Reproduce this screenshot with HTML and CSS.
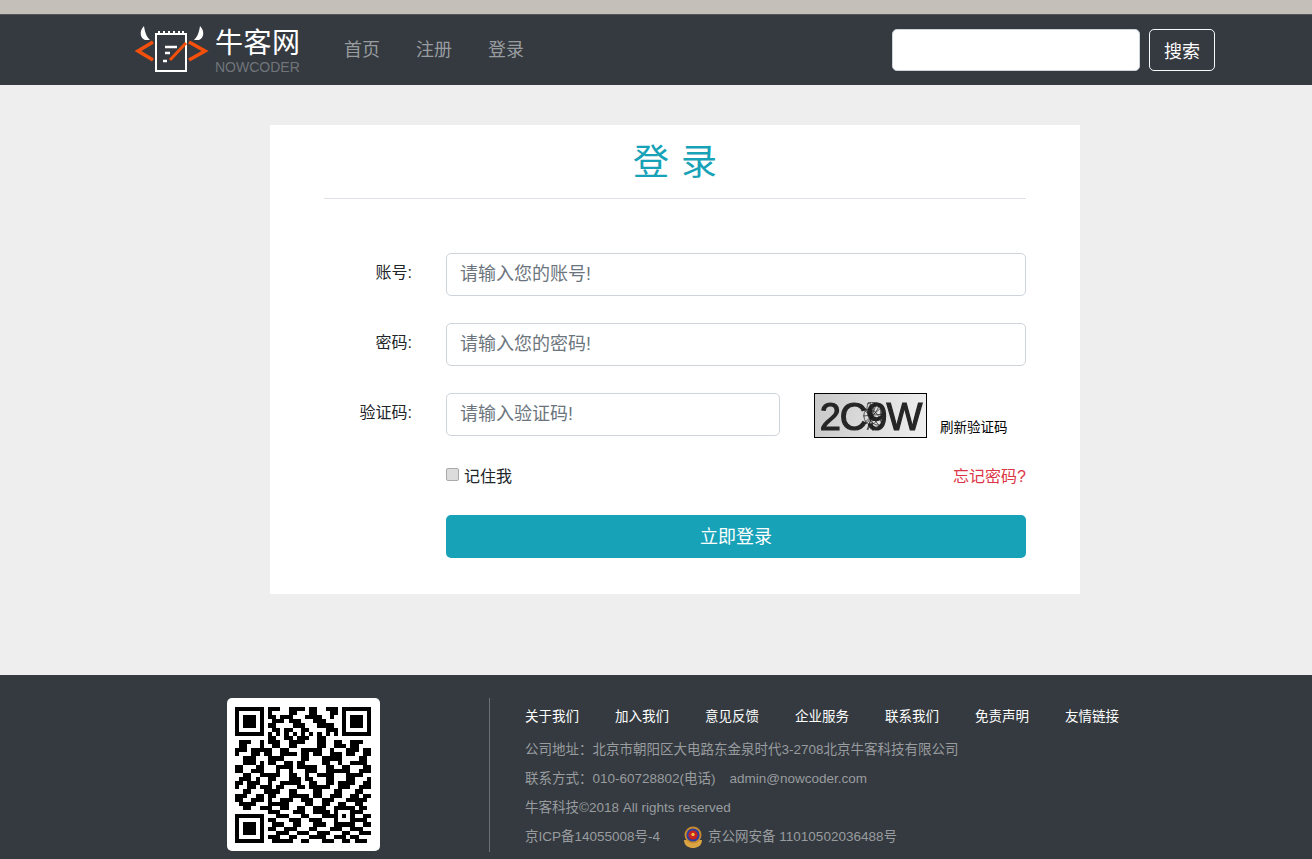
FILE: index.html
```html
<!DOCTYPE html>
<html lang="zh-CN">
<head>
    <meta charset="UTF-8">
    <meta name="viewport" content="width=device-width, initial-scale=1.0">
    <title>牛客网 - 登录</title>
    <link rel="stylesheet" href="styles.css">
</head>
<body>
    <div class="top-strip"></div>

    <header class="site-header">
        <div class="wrap header-inner">
            <a class="logo" href="#">
                <svg class="logo-mark" width="74" height="48" viewBox="0 0 74 48">
                    <path d="M9 1 C4 6 5 13 10 15 L15 15 C11 11 10 7 9 1Z" fill="#fff"/>
                    <path d="M65 1 C70 6 69 13 64 15 L59 15 C63 11 64 7 65 1Z" fill="#fff"/>
                    <path d="M18 17 L3 26 L18 35" fill="none" stroke="#f4500c" stroke-width="3.6"/>
                    <path d="M54 17 L70 26 L54 35" fill="none" stroke="#f4500c" stroke-width="3.6"/>
                    <rect x="21" y="9" width="30" height="37" fill="none" stroke="#fff" stroke-width="2"/>
                    <path d="M24 9 V6 M29 9 V6 M34 9 V6 M39 9 V6 M44 9 V6 M48 9 V6" stroke="#fff" stroke-width="2"/>
                    <path d="M30 22 H42 M30 28 H35 M28 36 H32" stroke="#fff" stroke-width="2.4"/>
                    <path d="M35 35 L51 18" stroke="#f4500c" stroke-width="3"/>
                </svg>
                <span class="logo-text">
                    <span class="logo-name">牛客网</span>
                    <span class="logo-sub">NOWCODER</span>
                </span>
            </a>
            <nav class="main-nav">
                <a href="#">首页</a>
                <a href="#">注册</a>
                <a href="#">登录</a>
            </nav>
            <form class="search-form">
                <input type="text" class="search-input">
                <button type="button" class="search-btn">搜索</button>
            </form>
        </div>
    </header>

    <main class="wrap main-area">
        <section class="login-card">
            <h1 class="login-title">登 录</h1>
            <hr class="login-rule">

            <form class="login-form">
                <div class="form-row">
                    <label class="form-label">账号:</label>
                    <input type="text" class="form-input" placeholder="请输入您的账号!">
                </div>
                <div class="form-row">
                    <label class="form-label">密码:</label>
                    <input type="password" class="form-input" placeholder="请输入您的密码!">
                </div>
                <div class="form-row">
                    <label class="form-label">验证码:</label>
                    <input type="text" class="form-input code-input" placeholder="请输入验证码!">
                    <div class="captcha">
                        <span class="captcha-text">2C9W</span>
                        <svg class="captcha-noise" width="111" height="43" viewBox="0 0 111 43">
                            <path d="M52 10 C60 6 68 10 65 22 C60 34 48 32 49 20 C50 12 62 14 66 28 M54 8 C48 16 56 36 67 30 M48 30 L68 12 M52 36 L62 8 M50 14 L66 34 M55 8 L58 37 M48 22 L70 20 M49 16 C56 22 62 26 68 22 M51 30 C56 24 62 18 65 10 M60 8 L53 36" fill="none" stroke="#1c1c1c" stroke-width=".7"/>
                        </svg>
                    </div>
                    <a class="captcha-refresh" href="#">刷新验证码</a>
                </div>
                <div class="form-options">
                    <label class="remember"><input type="checkbox"> 记住我</label>
                    <a class="forgot" href="#">忘记密码?</a>
                </div>
                <button type="button" class="login-btn">立即登录</button>
            </form>
        </section>
    </main>

    <footer class="site-footer">
        <div class="wrap footer-inner">
            <div class="qr-card">
                <svg id="qrCode" class="qr-code" width="136" height="136" viewBox="0 0 33 33" shape-rendering="crispEdges"></svg>
            </div>
            <div class="footer-info">
                <ul class="footer-links">
                    <li><a href="#">关于我们</a></li>
                    <li><a href="#">加入我们</a></li>
                    <li><a href="#">意见反馈</a></li>
                    <li><a href="#">企业服务</a></li>
                    <li><a href="#">联系我们</a></li>
                    <li><a href="#">免责声明</a></li>
                    <li><a href="#">友情链接</a></li>
                </ul>
                <ul class="footer-lines">
                    <li>公司地址：北京市朝阳区大电路东金泉时代3-2708北京牛客科技有限公司</li>
                    <li>联系方式：010-60728802(电话)<span class="email">admin@nowcoder.com</span></li>
                    <li>牛客科技©2018 All rights reserved</li>
                    <li class="record-line">
                        <span>京ICP备14055008号-4</span>
                        <svg class="police-badge" width="20" height="22" viewBox="0 0 20 22">
                            <path d="M1 14 C1 20 6 22 10 22 C14 22 19 20 19 14 Z" fill="#d9a441"/>
                            <circle cx="10" cy="9" r="8.5" fill="#c98a2e"/>
                            <circle cx="10" cy="9" r="6.6" fill="#2b3f9e"/>
                            <circle cx="10" cy="9" r="4.6" fill="#c8231f"/>
                            <circle cx="10" cy="8.5" r="1.7" fill="#efc14c"/>
                        </svg>
                        <span>京公网安备 11010502036488号</span>
                    </li>
                </ul>
            </div>
        </div>
    </footer>

    <script>
        // 二维码矩阵, 1 为黑色模块
        const qrRows = [
            '111111101110011110110011101111111',
            '100000101000011000110001101000001',
            '101110101101110001111001001011101',
            '101110100111011100011100001011101',
            '101110101100001110001111001011101',
            '100000100110110011000011101000001',
            '111111101010101010101010101111111',
            '000000001100110111001100000000000',
            '011100101110011110001100110011100',
            '011000100110011000001100111011000',
            '111011111001100011111001000111011',
            '100011011001111011011001110110011',
            '001110001111000011000111110000110',
            '001110101100110110000110010011110',
            '110001100011110111110011001100011',
            '110011100010010001110011111100111',
            '001100111110011001001111000111100',
            '011101001100011101100011000110001',
            '110111001001111100110011011110011',
            '100110111011000110111110011100111',
            '001100011110011000011000110001100',
            '111001101100011111011001110011011',
            '110011101001110011100111000111110',
            '011110001111100001100110011001100',
            '001100111001100110011100111110110',
            '000000001110001110011110100011100',
            '111111100011100011000111101010011',
            '100000101100011100111000100011110',
            '101110100111001100011100111110011',
            '101110101100111000110001110011100',
            '101110100011100111001110001100111',
            '100000101110011000111100111011000',
            '111111100111110011000111001101110'
        ];

        function renderQr() {
            let d = '';
            qrRows.forEach((row, y) => {
                for (let x = 0; x < row.length; x++) {
                    if (row[x] === '1') {
                        d += `M${x} ${y}h1v1h-1z`;
                    }
                }
            });
            const path = document.createElementNS('http://www.w3.org/2000/svg', 'path');
            path.setAttribute('d', d);
            document.getElementById('qrCode').appendChild(path);
        }

        renderQr();
    </script>
</body>
</html>
```

FILE: styles.css
```css
:root {
    --dark-color: #343a40;
    --info-color: #17a2b8;
    --danger-color: #dc3545;
    --border-color: #ced4da;
    --muted-color: #6c757d;
}

* {
    margin: 0;
    padding: 0;
    box-sizing: border-box;
}

body {
    font-family: "Liberation Sans", "Noto Sans CJK SC", sans-serif;
    font-size: 16px;
    background-color: #eeeeee;
    color: #212529;
}

a {
    text-decoration: none;
}

ul {
    list-style: none;
}

.wrap {
    width: 1080px;
    margin-left: 135px;
}

.top-strip {
    height: 15px;
    background-color: #c4c0b9;
    border-bottom: 1px solid #55585a;
}

/* 顶部导航 */
.site-header {
    height: 70px;
    background-color: var(--dark-color);
}

.header-inner {
    height: 70px;
    display: flex;
    align-items: center;
}

.logo {
    display: flex;
    width: 209px;
    align-items: flex-start;
    padding-top: 1px;
    color: white;
}

.logo-mark {
    flex: none;
    margin-top: -2px;
}

.logo-text {
    display: flex;
    flex-direction: column;
    margin-left: 6px;
    padding-top: 1px;
}

.logo-name {
    font-size: 28px;
    line-height: 31px;
    letter-spacing: 0.5px;
    font-weight: 400;
    white-space: nowrap;
}

.logo-sub {
    font-size: 14px;
    line-height: 16px;
    color: #71757a;
}

.main-nav {
    display: flex;
    gap: 36px;
}

.main-nav a {
    font-size: 18px;
    line-height: 27px;
    color: #999c9f;
}

.search-form {
    display: flex;
    gap: 9px;
    margin-left: auto;
}

.search-input {
    width: 248px;
    height: 42px;
    border: 1px solid var(--border-color);
    border-radius: 5px;
    background-color: white;
}

.search-btn {
    width: 66px;
    height: 42px;
    font-family: inherit;
    font-size: 18px;
    color: white;
    background-color: transparent;
    border: 1px solid #f8f9fa;
    border-radius: 5px;
}

/* 登录卡片 */
.main-area {
    padding: 40px 0 81px;
}

.login-card {
    width: 810px;
    height: 469px;
    margin: 0 auto;
    padding: 0 54px;
    background-color: white;
}

.login-title {
    padding-top: 11px;
    height: 73px;
    font-size: 36px;
    font-weight: 400;
    line-height: 54px;
    text-align: center;
    word-spacing: 2px;
    color: var(--info-color);
}

.login-rule {
    border: none;
    border-top: 1px solid #dee2e6;
}

.login-form {
    padding-top: 54px;
}

.form-row {
    display: flex;
    height: 43px;
    margin-bottom: 27px;
}

.form-label {
    width: 88px;
    margin-right: 34px;
    flex: none;
    text-align: right;
    line-height: 40px;
}

.form-input {
    flex: 1;
    height: 43px;
    padding: 0 13px;
    font-family: inherit;
    font-size: 18px;
    border: 1px solid var(--border-color);
    border-radius: 5px;
}

.form-input::placeholder {
    color: var(--muted-color);
}

.code-input {
    flex: none;
    width: 334px;
}

.captcha {
    position: relative;
    width: 113px;
    height: 45px;
    margin-left: 34px;
    overflow: hidden;
    border: 1px solid #000;
    background: linear-gradient(100deg, #c9c9c9, #f0f0f0);
}

.captcha-text {
    display: block;
    font-size: 38px;
    line-height: 47px;
    text-align: center;
    letter-spacing: -1px;
    color: #262626;
    -webkit-text-stroke: 1.2px #262626;
    filter: blur(0.6px);
}

.captcha-noise {
    position: absolute;
    top: 0;
    left: 0;
}

.captcha-refresh {
    margin: 26px 0 0 13px;
    font-size: 13.5px;
    line-height: 18px;
    white-space: nowrap;
    color: #000;
}

.form-options {
    display: flex;
    justify-content: space-between;
    align-items: center;
    height: 24px;
    margin: 0 0 28px 122px;
}

.remember {
    display: flex;
    align-items: center;
    gap: 5px;
}

.remember input {
    appearance: none;
    width: 13px;
    height: 13px;
    margin-bottom: 2px;
    background-color: #dcdcdc;
    border: 1px solid #a9a9a9;
    border-radius: 2px;
}

.forgot {
    color: var(--danger-color);
}

.login-btn {
    display: block;
    width: 580px;
    height: 43px;
    margin-left: 122px;
    padding-bottom: 3px;
    font-family: inherit;
    font-size: 18px;
    color: white;
    background-color: var(--info-color);
    border: none;
    border-radius: 5px;
}

/* 页脚 */
.site-footer {
    height: 184px;
    overflow: hidden;
    background-color: var(--dark-color);
}

.footer-inner {
    display: flex;
    padding: 23px 0 0 92px;
}

.qr-card {
    width: 153px;
    height: 153px;
    padding: 9px 8px;
    background-color: white;
    border-radius: 5px;
}

.qr-code {
    display: block;
}

.footer-info {
    height: 154px;
    margin-left: 109px;
    padding-left: 35px;
    border-left: 1px solid #6c7075;
}

.footer-links {
    display: flex;
    gap: 36px;
    padding-top: 9px;
}

.footer-links a {
    font-size: 13.5px;
    line-height: 20px;
    color: white;
}

.footer-lines {
    padding-top: 8px;
}

.footer-lines li {
    height: 29px;
    font-size: 13.5px;
    line-height: 29px;
    color: #999c9f;
}

.email {
    margin-left: 14px;
}

.record-line {
    display: flex;
    align-items: center;
}

.police-badge {
    margin: 0 5px 0 23px;
}
```
